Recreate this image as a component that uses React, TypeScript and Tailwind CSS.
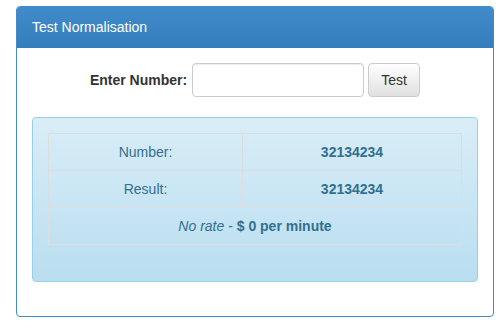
export default function App() {
  return (
    <div className="h-[336px] w-[504px] bg-white pt-[6px] pl-[16px] font-['Liberation_Sans',Arial,sans-serif] text-[14px] text-[#333]">
      <div className="w-[478px] h-[311px] rounded-[4px] border border-[#428bca] overflow-hidden flex flex-col">
        {/* Header */}
        <div className="h-[41px] bg-gradient-to-b from-[#428bca] to-[#357ebd] text-white text-[14px] px-[15px] flex items-center border-b border-[#357ebd]">
          Test Normalisation
        </div>

        <div className="px-[15px] pt-[15px]">
          {/* Form */}
          <div className="flex items-center justify-center gap-[4px] pl-[0px]">
            <span className="font-bold mr-[1px]">Enter Number:</span>
            <input
              type="text"
              className="w-[172px] h-[34px] rounded-[4px] border border-[#ccc] bg-white shadow-[inset_0_1px_1px_rgba(0,0,0,0.075)] outline-none px-2"
            />
            <button className="w-[52px] h-[34px] rounded-[4px] border border-[#ccc] bg-gradient-to-b from-white to-[#e0e0e0] text-[#333] shadow-[0_1px_0_rgba(255,255,255,0.15)]">
              Test
            </button>
          </div>

          {/* Result alert */}
          <div className="mt-[20px] h-[165px] rounded-[4px] border border-[#9acfea] bg-gradient-to-b from-[#d9edf7] to-[#b9def0] px-[15px] pt-[15px] text-[#31708f]">
            <table className="w-full border-collapse border border-[#ddd]">
              <tbody>
                <tr className="h-[37px]">
                  <td className="w-[194px] border border-[#ddd] text-center">Number:</td>
                  <td className="border border-[#ddd] text-center font-bold">32134234</td>
                </tr>
                <tr className="h-[37px]">
                  <td className="border border-[#ddd] text-center">Result:</td>
                  <td className="border border-[#ddd] text-center font-bold">32134234</td>
                </tr>
                <tr className="h-[37px]">
                  <td colSpan={2} className="border border-[#ddd] text-center">
                    <i>No rate</i> - <b>$ 0 per minute</b>
                  </td>
                </tr>
              </tbody>
            </table>
          </div>
        </div>
      </div>
    </div>
  )
}
